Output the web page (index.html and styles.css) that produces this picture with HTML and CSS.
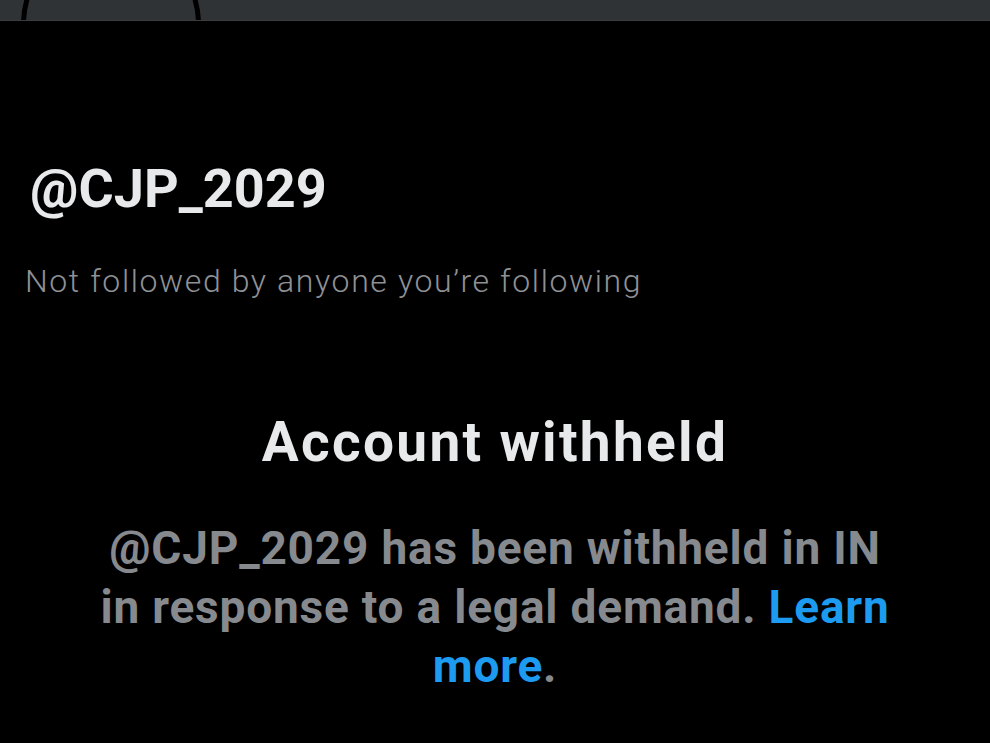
FILE: index.html
```html
<!DOCTYPE html>
<html lang="en">
<head>
<meta charset="utf-8">
<title>@CJP_2029</title>
<link rel="stylesheet" href="styles.css">
</head>
<body>
<div class="banner">
  <div class="avatar-ring"></div>
</div>
<main class="profile">
  <h1 class="handle">@CJP_2029</h1>
  <p class="followers">Not followed by anyone you’re following</p>
  <section class="withheld">
    <h2 class="withheld-title">Account withheld</h2>
    <p class="withheld-text">@CJP_2029 has been withheld in IN in response to a legal demand. <a class="learn" href="#">Learn more</a>.</p>
  </section>
</main>
</body>
</html>
```
FILE: styles.css
```css
html, body {
  margin: 0;
  padding: 0;
  background: #000;
}
body {
  width: 990px;
  height: 743px;
  overflow: hidden;
  font-family: Roboto, "Noto Sans", sans-serif;
}
.banner {
  position: relative;
  height: 20px;
  background: #2f3336;
  border-bottom: 1px solid #3b3e41;
  overflow: hidden;
}
.avatar-ring {
  position: absolute;
  left: 21px;
  top: -66px;
  width: 180px;
  height: 180px;
  box-sizing: border-box;
  border: 5px solid #000;
  border-radius: 50%;
}
.profile {
  padding: 136px 0 0 0;
}
.handle {
  margin: 0 0 0 30px;
  font-size: 54px;
  line-height: 64px;
  font-weight: 700;
  color: #e7e9ea;
}
.followers {
  margin: 40px 0 0 25px;
  font-size: 32px;
  line-height: 40px;
  font-weight: 300;
  letter-spacing: 1.6px;
  color: #8e9195;
}
.withheld {
  margin-top: 109px;
  display: flex;
  flex-direction: column;
  align-items: center;
}
.withheld-title {
  margin: 0;
  font-size: 55px;
  line-height: 64px;
  font-weight: 700;
  letter-spacing: 2.3px;
  color: #e7e9ea;
}
.withheld-text {
  margin: 45px 0 0 0;
  width: 818px;
  text-align: center;
  font-size: 46px;
  line-height: 59px;
  font-weight: 700;
  letter-spacing: 0.8px;
  color: #868a8e;
}
.learn {
  color: #1d9bf0;
  text-decoration: none;
}
```
